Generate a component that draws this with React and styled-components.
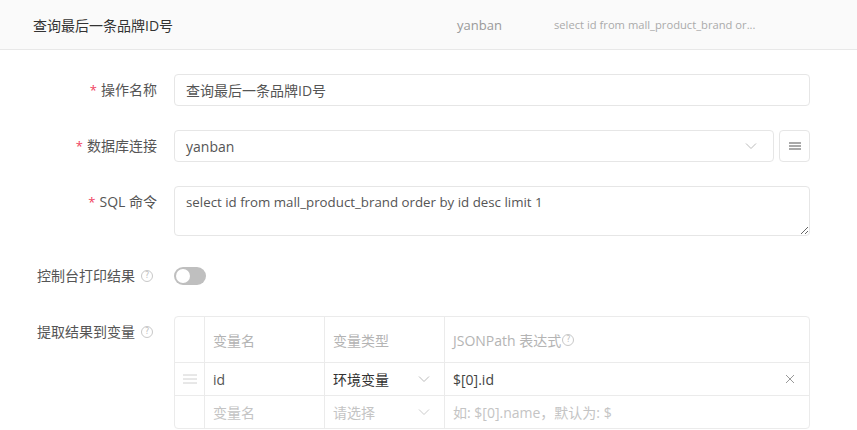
import React from "react";
import styled, { createGlobalStyle } from "styled-components";

const Global = createGlobalStyle`
  html, body { margin: 0; padding: 0; background: #fff; }
  body { font-family: "Open Sans", "Noto Sans CJK SC", sans-serif; color: #555; }
  * { box-sizing: border-box; }
`;

const Page = styled.div`
  width: 857px;
  height: 430px;
  overflow: hidden;
  background: #fff;
`;

const Header = styled.div`
  height: 50px;
  background: #fafafa;
  border-bottom: 1px solid #e8e8e8;
  display: grid;
  grid-template-columns: 424px 97px 1fr;
  align-items: center;
  padding-left: 33px;
`;

const HeaderTitle = styled.div`
  font-size: 14px;
  color: #333;
`;

const HeaderDb = styled.div`
  font-size: 13px;
  color: #999;
`;

const HeaderSql = styled.div`
  font-size: 11.2px;
  color: #aaa;
`;

const Form = styled.div`
  padding: 24px 47px 0 0;
  display: flex;
  flex-direction: column;
  gap: 24px;
`;

const Row = styled.div`
  display: grid;
  grid-template-columns: 158px 1fr;
  column-gap: 16px;
  align-items: start;
`;

const Label = styled.div`
  font-size: 14px;
  line-height: 32px;
  color: #555;
  text-align: right;
  white-space: nowrap;
  display: flex;
  justify-content: flex-end;
  align-items: center;
  padding-right: ${(p) => (p.$help ? "5px" : "1px")};
`;

const Star = styled.span`
  color: #f0415e;
  margin-right: 4px;
  font-size: 13px;
`;

const Help = styled.span`
  display: inline-flex;
  width: 12px;
  height: 12px;
  border: 1px solid #c8c8c8;
  border-radius: 50%;
  color: #c0c0c0;
  font-size: 8px;
  line-height: 1;
  align-items: center;
  justify-content: center;
  margin-left: ${(p) => p.$ml || "6px"};
  font-family: "DejaVu Sans", sans-serif;
`;

const Input = styled.div`
  height: 32px;
  border: 1px solid #e6e6e6;
  border-radius: 4px;
  padding: 0 11px;
  display: flex;
  align-items: center;
  font-size: 14px;
  color: #555;
  flex: 1;
`;

const SelectWrap = styled.div`
  display: flex;
  gap: 5px;
`;

const Chevron = ({ color = "#bbb", size = 12 }) => (
  <svg width={size} height={size} viewBox="0 0 12 12" fill="none">
    <path d="M1 3.5 L6 8.5 L11 3.5" stroke={color} strokeWidth="1" />
  </svg>
);

const SelectBox = styled(Input)`
  justify-content: space-between;
  padding-right: 16px;
`;

const IconButton = styled.div`
  width: 31px;
  height: 32px;
  border: 1px solid #e6e6e6;
  border-radius: 4px;
  display: flex;
  align-items: center;
  justify-content: center;
`;

const TextArea = styled.textarea`
  height: 50px;
  width: 100%;
  border: 1px solid #e6e6e6;
  border-radius: 4px;
  padding: 5px 11px;
  font-family: "Open Sans", "Noto Sans CJK SC", sans-serif;
  font-size: 13.3px;
  line-height: 20px;
  color: #555;
  resize: vertical;
  outline: none;
  display: block;
`;

const ToggleCell = styled.div`
  height: 32px;
  display: flex;
  align-items: center;
`;

const Toggle = styled.div`
  width: 32px;
  height: 18px;
  border-radius: 9px;
  background: #bfbfbf;
  position: relative;
  &::after {
    content: "";
    position: absolute;
    left: 2px;
    top: 2px;
    width: 14px;
    height: 14px;
    border-radius: 50%;
    background: #fff;
  }
`;

const Table = styled.div`
  border: 1px solid #ebebeb;
  border-radius: 4px;
  display: grid;
  grid-template-columns: 29px 120px 120px 1fr;
  font-size: 14px;
`;

const Cell = styled.div`
  height: ${(p) => (p.$head ? "45px" : "33px")};
  border-left: ${(p) => (p.$first ? "none" : "1px solid #ebebeb")};
  border-top: ${(p) => (p.$head ? "none" : "1px solid #ebebeb")};
  display: flex;
  align-items: center;
  justify-content: ${(p) => (p.$center ? "center" : p.$start ? "flex-start" : "space-between")};
  padding: 0 ${(p) => (p.$center ? "0" : "14px")} 0 ${(p) => (p.$center ? "0" : "8px")};
  color: ${(p) => p.$color || "#555"};
  white-space: nowrap;
`;

const Drag = () => (
  <svg width="14" height="10" viewBox="0 0 14 10">
    <path d="M0 1h14M0 5h14M0 9h14" stroke="#d0d0d0" strokeWidth="1" />
  </svg>
);

const Menu = () => (
  <svg width="12" height="10" viewBox="0 0 12 10">
    <path d="M0 2h12M0 5h12M0 8h12" stroke="#555" strokeWidth="1.2" />
  </svg>
);

const Close = () => (
  <svg width="10" height="10" viewBox="0 0 10 10">
    <path d="M1 1L9 9M9 1L1 9" stroke="#999" strokeWidth="1" />
  </svg>
);

export default function App() {
  return (
    <Page>
      <Global />
      <Header>
        <HeaderTitle>查询最后一条品牌ID号</HeaderTitle>
        <HeaderDb>yanban</HeaderDb>
        <HeaderSql>select id from mall_product_brand or...</HeaderSql>
      </Header>
      <Form>
        <Row>
          <Label>
            <Star>*</Star>操作名称
          </Label>
          <Input>查询最后一条品牌ID号</Input>
        </Row>
        <Row>
          <Label>
            <Star>*</Star>数据库连接
          </Label>
          <SelectWrap>
            <SelectBox>
              yanban
              <Chevron />
            </SelectBox>
            <IconButton>
              <Menu />
            </IconButton>
          </SelectWrap>
        </Row>
        <Row>
          <Label>
            <Star>*</Star>SQL 命令
          </Label>
          <TextArea
            readOnly
            defaultValue="select id from mall_product_brand order by id desc limit 1"
          />
        </Row>
        <Row>
          <Label $help>
            控制台打印结果<Help>?</Help>
          </Label>
          <ToggleCell>
            <Toggle />
          </ToggleCell>
        </Row>
        <Row>
          <Label $help>
            提取结果到变量<Help>?</Help>
          </Label>
          <Table>
            <Cell $head $first $center />
            <Cell $head $color="#b4b4b4">变量名</Cell>
            <Cell $head $color="#b4b4b4">变量类型</Cell>
            <Cell $head $start $color="#b4b4b4">
              JSONPath 表达式<Help $ml="1px">?</Help>
            </Cell>

            <Cell $first $center>
              <Drag />
            </Cell>
            <Cell $color="#555">id</Cell>
            <Cell $color="#333">
              环境变量
              <Chevron />
            </Cell>
            <Cell $color="#444">
              $[0].id
              <Close />
            </Cell>

            <Cell $first $center />
            <Cell $color="#c4c4c4">变量名</Cell>
            <Cell $color="#c4c4c4">
              请选择
              <Chevron color="#ccc" />
            </Cell>
            <Cell $color="#c4c4c4">如: $[0].name，默认为: $</Cell>
          </Table>
        </Row>
      </Form>
    </Page>
  );
}
